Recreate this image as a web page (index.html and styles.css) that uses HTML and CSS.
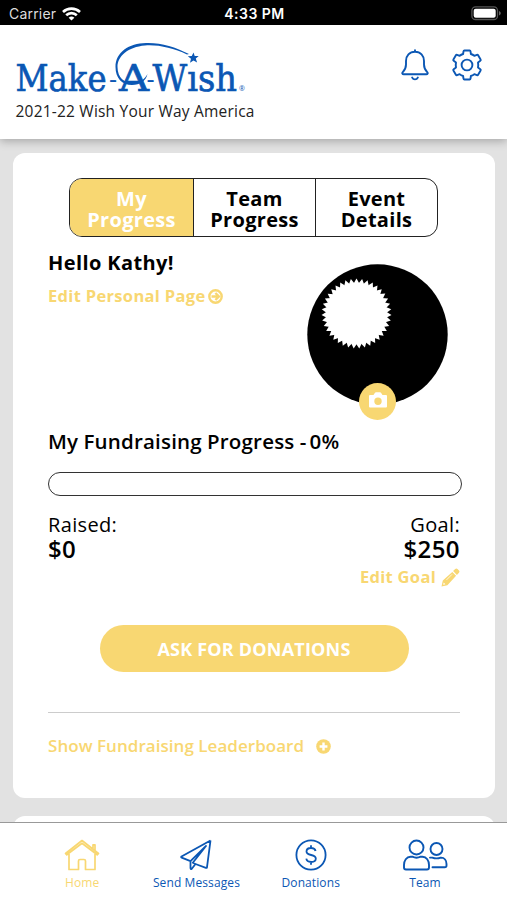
FILE: index.html
```
<!DOCTYPE html>
<html lang="en">
<head>
<meta charset="utf-8">
<title>Make-A-Wish Fundraising</title>
<link rel="stylesheet" href="styles.css">
</head>
<body>
<div class="screen">
  <div class="status">
    <div class="carrier">Carrier
      <svg width="19" height="14" viewBox="0 0 19 14" fill="none" stroke="#fff" stroke-width="2.6"><path d="M1 5a12.3 12.3 0 0 1 17 0M4.2 8.3a7.6 7.6 0 0 1 10.6 0"/><path d="M9.5 13.6 6.6 10.8a4.2 4.2 0 0 1 5.8 0z" fill="#fff" stroke="none"/></svg>
    </div>
    <div class="time">4:33 PM</div>
    <svg class="battery" width="31" height="15" viewBox="0 0 31 15"><rect x=".9" y=".9" width="25.6" height="12.6" rx="3.6" fill="none" stroke="#555" stroke-width="1.3"/><rect x="2.7" y="2.7" width="22" height="9" rx="2" fill="#fff"/><path d="M28 5c2.3.8 2.3 3.700 0 4.500z" fill="#666"/></svg>
  </div>
  <header class="header">
    <div class="brand">
      <svg class="logo" width="240" height="62" viewBox="0 0 240 62" fill="#0b57b4">
        <text class="logo-text" y="49"><tspan x="0.500" textLength="91" lengthAdjust="spacingAndGlyphs">Make</tspan><tspan class="dash" x="94" y="45.500">-</tspan><tspan x="104" y="49" textLength="30" lengthAdjust="spacingAndGlyphs">A</tspan><tspan class="dash" x="131.500" y="45.500">-</tspan><tspan x="137.500" y="49" textLength="84.500" lengthAdjust="spacingAndGlyphs">Wısh</tspan></text>
        <text class="reg" x="224" y="49">®</text>
        <path d="M172 12.500C158 6 143 2.500 130 3.500C113 5 102.500 14 102.500 25C102.500 36 110 41 117 41C125 41 130 37 132.500 32C131 39 125 43 117 43C107 43 100.500 36 100.500 25C100.500 10 114 1.500 131 1C146 .5 160 5 174 12z"/>
        <path d="m178.500 10.500 1.200 3.600 4-.1-2.900 2.500 1.300 4-3.600-2-3.500 2.200 1-4-3.200-2.500 4-.2z"/>
      </svg>
      <div class="event">2021-22 Wish Your Way America</div>
    </div>
    <svg class="bell" width="28" height="32" viewBox="0 0 28 32" fill="none" stroke="#0b57b4" stroke-width="1.900" stroke-linecap="round" stroke-linejoin="round"><path d="M14 1.200v1.500M14 2.700C8.500 2.700 5 6.700 5 12v3.500c0 3.500-1 5.300-3.200 7.600-1 1.100-.4 2.200.9 2.200h22.600c1.300 0 1.900-1.100.9-2.200C24 20.800 23 19 23 15.500V12c0-5.300-3.500-9.300-9-9.300zM11.200 28.600c1.200 2.300 4.400 2.300 5.600 0"/></svg>
    <svg class="gear" width="32" height="32" viewBox="0 0 32 32" fill="none" stroke="#0b57b4" stroke-width="1.900" stroke-linejoin="round"><circle cx="16" cy="16" r="5.400"/><path d="M13.400 1.500h5.200q.8 0 .9.800l.4 2.700q2 .7 3.400 1.800l2.600-1q.8-.3 1.200.4l2.500 4.300q.4.800-.3 1.300L27 13.500q.5 2.500 0 5l2.300 1.700q.7.500.3 1.300l-2.500 4.300q-.4.700-1.200.4l-2.600-1q-1.400 1.100-3.400 1.800l-.4 2.700q-.1.800-.9.800h-5.200q-.8 0-.9-.8l-.4-2.700q-2-.7-3.400-1.800l-2.600 1q-.8.300-1.200-.4l-2.500-4.300q-.4-.8.300-1.300L5 18.500q-.5-2.500 0-5l-2.300-1.700q-.7-.5-.3-1.300l2.500-4.300q.4-.7 1.200-.4l2.600 1q1.400-1.100 3.400-1.800l.4-2.700q.1-.8.900-.8z"/></svg>
  </header>
  <main class="content">
    <section class="card">
      <div class="tabs">
        <div class="tab active">My<br>Progress</div>
        <div class="tab">Team<br>Progress</div>
        <div class="tab">Event<br>Details</div>
      </div>
      <div class="profile">
        <div>
          <h1 class="hello">Hello Kathy!</h1>
          <a class="link edit-page"><span>Edit Personal Page</span>
            <svg width="15" height="15" viewBox="0 0 15 15" fill="none" stroke="#f8d772" stroke-width="2.400"><circle cx="7.500" cy="7.500" r="6.200"/><path d="M3.500 7.500h7M7.400 4l3.500 3.500L7.400 11"/></svg>
          </a>
        </div>
        <div class="avatar">
          <svg width="141" height="141" viewBox="0 0 141 141">
            <defs><path id="tri" d="M0-35 30.300 17.500h-60.600z"/></defs>
            <circle cx="70.500" cy="70.500" r="70.200"/>
            <g transform="translate(49.500 49.500)" fill="#fff"><use href="#tri"/><use href="#tri" transform="rotate(9.231)"/><use href="#tri" transform="rotate(18.462)"/><use href="#tri" transform="rotate(27.692)"/><use href="#tri" transform="rotate(36.923)"/><use href="#tri" transform="rotate(46.154)"/><use href="#tri" transform="rotate(55.385)"/><use href="#tri" transform="rotate(64.615)"/><use href="#tri" transform="rotate(73.846)"/><use href="#tri" transform="rotate(83.077)"/><use href="#tri" transform="rotate(92.308)"/><use href="#tri" transform="rotate(101.538)"/><use href="#tri" transform="rotate(110.769)"/></g>
          </svg>
          <div class="camera"><svg width="20" height="16" viewBox="0 0 20 16"><path fill="#fff" fill-rule="evenodd" d="M2 3h3.500L7 .8Q7.300.3 8 .3h4q.7 0 1 .5L14.500 3H18q1 0 1 1v10.500q0 1-1 1H2q-1 0-1-1V4q0-1 1-1zm8 2.500a3.700 3.700 0 1 0 0 7.400 3.700 3.700 0 0 0 0-7.400z"/></svg></div>
        </div>
      </div>
      <h2 class="progress-title"><span>My Fundraising Progress -</span> <span class="pct">0%</span></h2>
      <div class="bar"></div>
      <div class="amounts">
        <div><div class="label raised">Raised:</div><div class="value">$0</div></div>
        <div class="goal"><div class="label">Goal:</div><div class="value">$250</div>
          <a class="link edit-goal"><span>Edit Goal</span>
            <svg width="19" height="19" viewBox="0 0 19 19" fill="#f8d772"><path d="M12.100 3.100 14.200 1q1.200-1 2.300 0L18 2.500q1 1.100 0 2.300L15.900 6.900zM11.300 3.900l3.800 3.800L6.400 17.200.5 18.500 1.800 12.600z"/><path d="m5.500 11.900 5.500-5.500" stroke="#fff" stroke-width=".8"/><path d="m2.700 14.600 1.700 1.700-1.800.5-.4-.4z" fill="#fff"/></svg>
          </a>
        </div>
      </div>
      <button class="ask">ASK FOR DONATIONS</button>
      <a class="leader"><span>Show Fundraising Leaderboard</span>
        <svg width="15" height="15" viewBox="0 0 15 15"><circle cx="7.500" cy="7.500" r="7.300" fill="#f8d772"/><path d="M7.500 3.600v7.800M3.600 7.500h7.800" stroke="#fff" stroke-width="2.400"/></svg>
      </a>
    </section>
    <section class="card next"></section>
  </main>
  <nav class="nav">
    <div class="item home">
      <svg width="36" height="32" viewBox="0 0 36 32" fill="none" stroke="#f8d772" stroke-width="1.700" stroke-linejoin="round" stroke-linecap="round"><path d="M5 15v15.500h9.500V22q0-1.500 1.500-1.500h4q1.500 0 1.500 1.500v8.500H31V15M1.500 14.500 18 1.500l16.500 13-1.300 1.300L18 4.300 2.800 15.800zM29 9.500V5.800h2v5.500"/></svg>
      <span class="t-home">Home</span>
    </div>
    <div class="item">
      <svg width="32" height="32" viewBox="0 0 32 32" fill="none" stroke="#0b57b4" stroke-width="1.800" stroke-linejoin="round"><path d="M30.500 1.500 1.500 17.500q-.8.700.2 1.100l8.800 3.600M30.500 1.500 27 28.200q-.2 1-1.100.7L15.500 25M26 7 10.500 22.200v7q.2 1.500 1.300.6L15.500 25l-2.700-1.300z"/></svg>
      <span class="t-send">Send Messages</span>
    </div>
    <div class="item">
      <svg width="32" height="32" viewBox="0 0 32 32" fill="none" stroke="#0b57b4" stroke-width="1.800"><circle cx="16" cy="16" r="14.600"/><path d="M20.600 12c-.5-2-2.200-3-4.600-3-2.600 0-4.500 1.400-4.500 3.500 0 4.800 9.300 2.200 9.300 7 0 2.200-2 3.500-4.600 3.500-2.700 0-4.600-1.200-4.900-3.300M16 6.300V9M16 23v2.800"/></svg>
      <span class="t-don">Donations</span>
    </div>
    <div class="item">
      <svg width="46" height="32" viewBox="0 0 46 32" fill="none" stroke="#0b57b4" stroke-width="1.900" stroke-linejoin="round" stroke-linecap="round"><circle cx="14.500" cy="8.500" r="7"/><path d="M8.500 17.700h1.800q4.200 2 8.400 0h1.800c4 0 6.500 4 6.500 8.300v2.500q0 2-2 2H4q-2 0-2-2V26c0-4.300 2.500-8.300 6.500-8.300z"/><circle cx="34.500" cy="10" r="6"/><path d="M28 18.600h2.300q4.200 1.600 8.400 0H39c3.500 0 5.500 3.200 5.500 6.500v1.300q0 1.800-1.800 1.800H30.500"/></svg>
      <span class="t-team">Team</span>
    </div>
  </nav>
</div>
</body>
</html>
```
FILE: styles.css
```
* { box-sizing: border-box; }
body { margin: 0; font-family: "Open Sans", sans-serif; color: #000; }
h1, h2 { margin: 0; }
svg { display: block; flex: none; }
span, .event, .hello, .carrier, .time { white-space: nowrap; }
.screen { width: 507px; height: 900px; display: flex; flex-direction: column; overflow: hidden; background: #e2e2e2; }
.status { flex: none; height: 25px; background: #000; color: #fff; display: grid; grid-template-columns: 1fr auto 1fr; align-items: center; padding: 2px 5px 0 9px; font-family: Inter, sans-serif; }
.carrier { display: flex; gap: 6px; align-items: center; font-size: 14px; color: #ddd; letter-spacing: .2px; }
.time { font-size: 14px; font-weight: 600; letter-spacing: .5px; position: relative; left: -1px; }
.battery { justify-self: end; }
.header { flex: none; height: 114px; background: #fff; display: flex; padding: 17px 24px 0 15px; box-shadow: 0 2px 9px rgba(0,0,0,.28); z-index: 1; }
.brand { flex: 1; }
.logo { margin-bottom: -8px; }
.logo-text { font-family: "DejaVu Serif", serif; font-size: 38px; stroke: #0b57b4; stroke-width: .7px; }
.dash { font-size: 24px; stroke: none; }
.reg { font-size: 7px; font-family: "Open Sans", sans-serif; }
.event { font-size: 15.500px; line-height: 22px; margin: 4px 0 0 .5px; color: #222; letter-spacing: .21px; }
.bell { margin: 7px 22px 0 0; }
.gear { margin-top: 7px; }
.content { flex: 1; overflow: hidden; padding: 14px 12px 0 13px; display: flex; flex-direction: column; gap: 18px; }
.card { flex: none; height: 645px; background: #fff; border-radius: 12px; padding: 25px 34px 0 35px; display: flex; flex-direction: column; }
.next { height: 60px; }
.tabs { flex: none; display: grid; grid-template-columns: 124px 122px 1fr; width: 369px; height: 59px; margin-left: 21px; border: 1.500px solid #222; border-radius: 13px; overflow: hidden; }
.tab { display: flex; align-items: center; justify-content: center; text-align: center; font-size: 20px; font-weight: 700; line-height: 21px; letter-spacing: .3px; border-right: 1px solid #222; padding-top: 2px; }
.tab:last-child { border-right: 0; }
.active { background: #f8d772; color: #fff; }
.profile { display: flex; justify-content: space-between; height: 170px; padding: 12px 13px 0 0; }
.hello { font-size: 20px; line-height: 28px; letter-spacing: .4px; }
.link { display: flex; align-items: center; color: #f8d772; font-weight: 700; font-size: 16.500px; line-height: 22px; }
.edit-page { gap: 3px; margin-top: 8px; letter-spacing: .32px; }
.avatar { position: relative; height: 141px; margin-top: 15px; }
.camera { position: absolute; left: 52px; top: 119px; width: 37px; height: 37px; border-radius: 50%; background: #f8d772; display: flex; align-items: center; justify-content: center; padding-bottom: 4px; }
.progress-title { font-size: 20.500px; font-weight: 600; line-height: 28px; margin-top: 20px; letter-spacing: .2px; word-spacing: -.4px; }
.pct { margin-left: -2px; }
.bar { flex: none; width: 414px; height: 24px; margin-top: 17px; border: 1.500px solid #333; border-radius: 12px; }
.amounts { display: flex; justify-content: space-between; margin-top: 17px; height: 92px; padding-right: 1px; }
.label { font-size: 20px; line-height: 24px; letter-spacing: .35px; }
.value { font-size: 24px; font-weight: 600; line-height: 23px; letter-spacing: .4px; }
.goal { text-align: right; }
.edit-goal { gap: 5px; justify-content: flex-end; margin-top: 6px; letter-spacing: .3px; }
.ask { flex: none; width: 309px; height: 47px; margin: 20px 0 0 51.500px; border: 0; border-radius: 24px; background: #f8d772; color: #fff; font: 700 18px "Open Sans", sans-serif; letter-spacing: .2px; }
.leader { display: flex; align-items: center; gap: 12px; margin: 40px 1px 0 0; border-top: 1px solid #ccc; padding-top: 21px; color: #f8d772; font-size: 17px; line-height: 24px; font-weight: 600; letter-spacing: .04px; }
.nav { flex: none; height: 78px; background: #fff; border-top: 1.500px solid #999; display: grid; grid-template-columns: repeat(4, 114.300px); padding: 16px 0 0 25px; z-index: 1; }
.item { display: flex; flex-direction: column; align-items: center; color: #0b57b4; font-size: 12px; line-height: 17px; gap: 3px; letter-spacing: .1px; }
.home { color: #f8d772; }
```
